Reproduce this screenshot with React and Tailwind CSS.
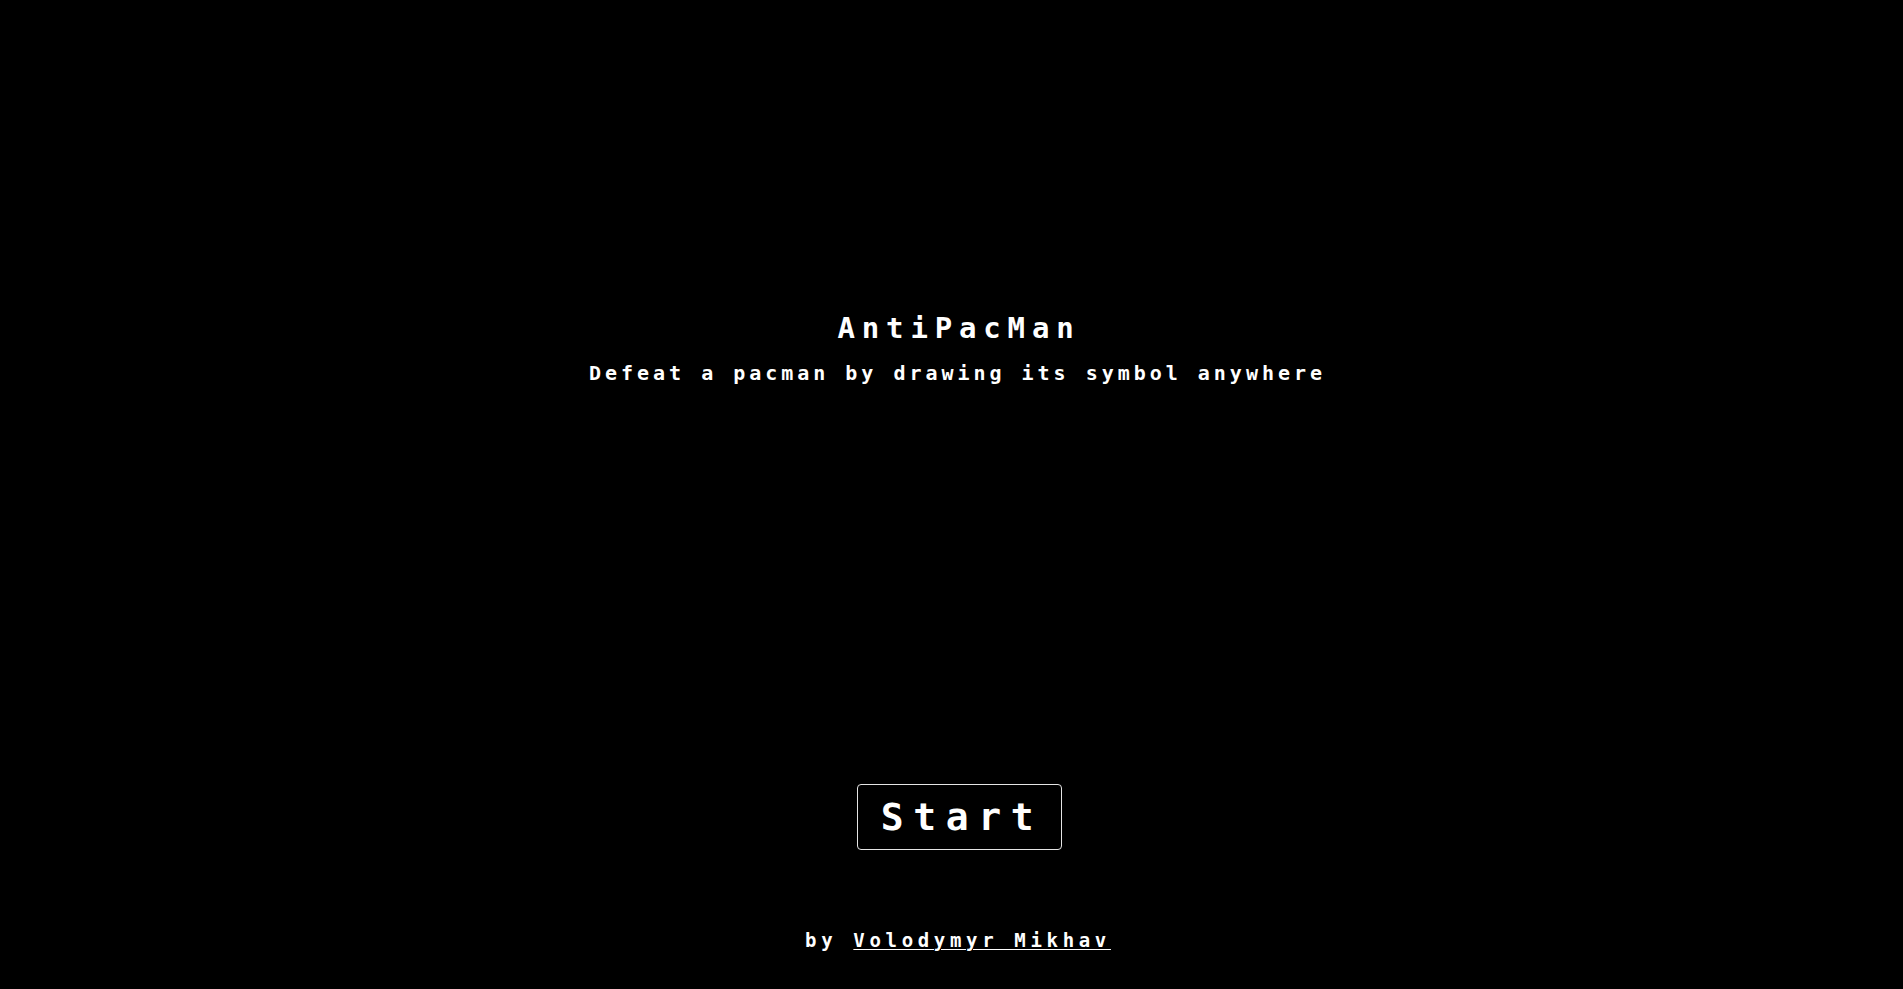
export default function App() {
  const font = { fontFamily: '"DejaVu Sans Mono", "Liberation Mono", monospace' };
  return (
    <div className="h-screen w-full bg-black text-white overflow-hidden" style={font}>
      <div className="flex flex-col items-center pt-[314px] pl-[8px]">
        <h1 className="font-bold text-[29px] leading-[29px] tracking-[6.84px] pl-[7px] m-0">
          AntiPacMan
        </h1>
        <p className="mt-[20px] font-bold text-[20px] leading-[20px] tracking-[3.98px] pl-[4px] m-0">
          Defeat a pacman by drawing its symbol anywhere
        </p>
        <button className="mt-[401px] ml-[7px] w-[205px] h-[66px] flex items-center justify-center border border-[#e5e5e5] rounded-[4px] bg-black text-white font-bold text-[38px] leading-[38px] tracking-[9.6px] pl-[6px]">
          Start
        </button>
        <div className="mt-[81px] font-bold text-[19px] leading-[19px] tracking-[4.66px] pl-[5px]">
          by{' '}
          <a href="#" className="underline decoration-1 underline-offset-[2px]">
            Volodymyr Mikhav
          </a>
        </div>
      </div>
    </div>
  );
}
